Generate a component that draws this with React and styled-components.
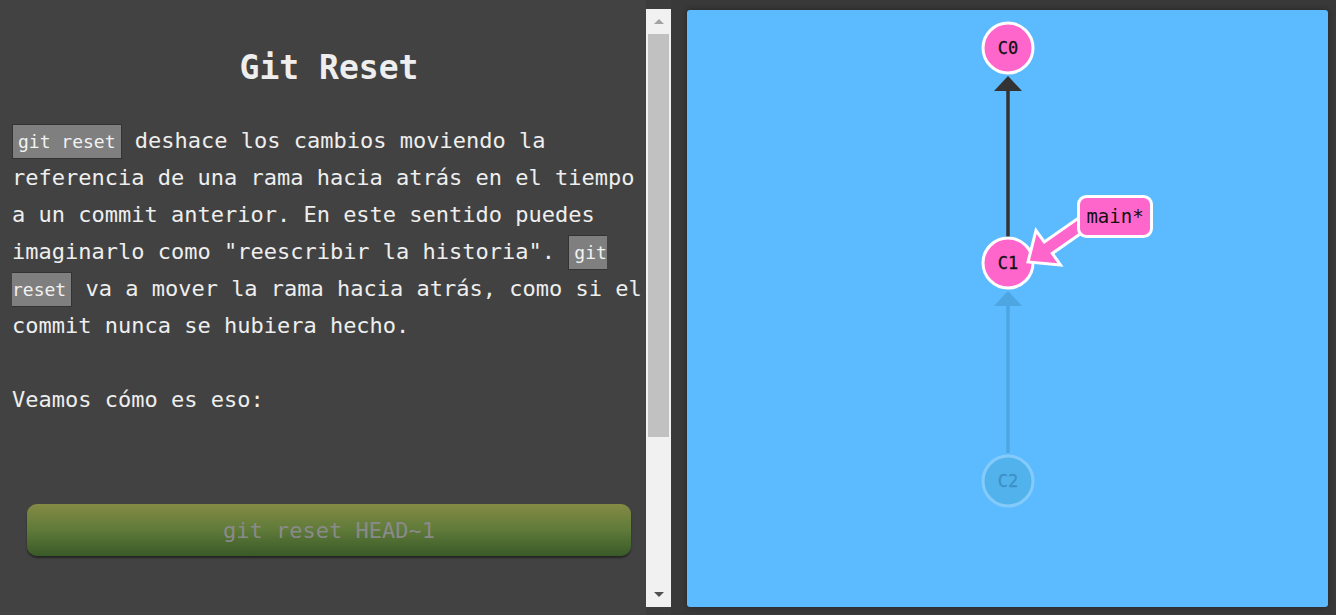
import React from "react";
import styled, { createGlobalStyle } from "styled-components";

const GlobalStyle = createGlobalStyle`
  html, body { margin: 0; padding: 0; background: #3a3a3a; overflow: hidden; }
  #root { height: 100vh; }
`;

const Page = styled.div`
  display: flex;
  height: 615px;
  width: 1336px;
  font-family: "DejaVu Sans Mono", "Liberation Mono", monospace;
`;

const InstructionsPane = styled.div`
  width: 646px;
  flex: none;
  box-sizing: border-box;
  background: #424242;
  padding: 48px 0 0 12px;
  color: #eeeeee;
`;

const Title = styled.h1`
  margin: 0 0 34px;
  font-size: 33px;
  line-height: 40px;
  font-weight: bold;
  text-align: center;
  color: #eeeeee;
`;

const Paragraph = styled.p`
  margin: ${(p) => (p.$gap ? "37px" : "0")} 0 0;
  font-size: 22px;
  line-height: 37px;
  white-space: nowrap;
`;

const Code = styled.code`
  font-family: "DejaVu Sans Mono", "Liberation Mono", monospace;
  font-size: 18px;
  line-height: 18px;
  background: #7f7f7f;
  border: 1px solid #333333;
  padding: 6px 5px;
  color: #f2f2f2;
`;

const CommandButton = styled.div`
  margin: 86px 15px 0;
  height: 52px;
  border-radius: 10px;
  background: linear-gradient(to bottom, #848b44 0%, #5f7a39 50%, #395a28 100%);
  box-shadow: 0 2px 2px rgba(0, 0, 0, 0.45);
  display: flex;
  align-items: center;
  justify-content: center;
  color: #8a8a8a;
  font-size: 22px;
`;

const ScrollColumn = styled.div`
  width: 25px;
  flex: none;
  display: flex;
  padding: 9px 0 8px;
  box-sizing: border-box;
  background: #3c3c3c;
`;

const ScrollTrack = styled.div`
  flex: 1;
  background: #f1f1f1;
  display: flex;
  flex-direction: column;
  align-items: center;
`;

const ScrollButton = styled.div`
  height: 25px;
  width: 100%;
  flex: none;
  display: flex;
  align-items: center;
  justify-content: center;
`;

const Triangle = styled.div`
  width: 0;
  height: 0;
  border-left: 5px solid transparent;
  border-right: 5px solid transparent;
  ${(p) =>
    p.$up
      ? `border-bottom: 5px solid #a3a3a3;`
      : `border-top: 5px solid #505050;`}
`;

const Thumb = styled.div`
  width: 21px;
  height: 403px;
  background: #c1c1c1;
  flex: none;
`;

const Filler = styled.div`
  flex: 1;
`;

const VisualArea = styled.div`
  flex: 1;
  display: flex;
  padding: 10px 8px 8px 16px;
  background: #393939;
`;

const Canvas = styled.div`
  flex: 1;
  background: #5cbaff;
  border-radius: 3px;
  box-shadow: 0 0 6px rgba(0, 0, 0, 0.35);
  overflow: hidden;
  display: flex;
`;

const GraphSvg = styled.svg`
  width: 100%;
  height: 100%;
  display: block;
`;

const CommitLabel = styled.text`
  font-family: "DejaVu Sans Mono", "Liberation Mono", monospace;
  font-size: 17px;
`;

const BranchLabel = styled.text`
  font-family: "DejaVu Sans Mono", "Liberation Mono", monospace;
  font-size: 19px;
`;

function Commit({ x, y, id, faded }) {
  return (
    <g>
      <circle
        cx={x}
        cy={y}
        r={25}
        fill={faded ? "#52b3ec" : "#ff66cc"}
        stroke={faded ? "#84cbfb" : "#ffffff"}
        strokeWidth={3}
      />
      <CommitLabel
        x={x}
        y={y + 6}
        textAnchor="middle"
        fill={faded ? "#3d90c6" : "#111111"}
        stroke={faded ? "#3d90c6" : "#111111"}
        strokeWidth={0.3}
      >
        {id}
      </CommitLabel>
    </g>
  );
}

function Edge({ x, y1, y2, faded }) {
  const c = faded ? "#4da6e2" : "#333333";
  return (
    <g>
      <line x1={x} y1={y1} x2={x} y2={y2 + 14} stroke={c} strokeWidth={3.5} />
      <polygon points={`${x},${y2} ${x - 14},${y2 + 15} ${x + 14},${y2 + 15}`} fill={c} />
    </g>
  );
}

export default function App() {
  return (
    <>
      <GlobalStyle />
      <Page>
        <InstructionsPane>
          <Title>Git Reset</Title>
          <Paragraph>
            <Code>git reset</Code> deshace los cambios moviendo la
            <br />
            referencia de una rama hacia atrás en el tiempo
            <br />
            a un commit anterior. En este sentido puedes
            <br />
            imaginarlo como "reescribir la historia". <Code>git<br />reset</Code> va a mover la rama hacia atrás, como si el
            <br />
            commit nunca se hubiera hecho.
          </Paragraph>
          <Paragraph $gap>Veamos cómo es eso:</Paragraph>
          <CommandButton>git reset HEAD~1</CommandButton>
        </InstructionsPane>
        <ScrollColumn>
          <ScrollTrack>
            <ScrollButton>
              <Triangle $up />
            </ScrollButton>
            <Thumb />
            <Filler />
            <ScrollButton>
              <Triangle />
            </ScrollButton>
          </ScrollTrack>
        </ScrollColumn>
        <VisualArea>
          <Canvas>
            <GraphSvg viewBox="0 0 641 597" preserveAspectRatio="xMinYMin meet">
              <Edge x={321} y1={443} y2={281} faded />
              <Edge x={321} y1={228} y2={66} />
              <Commit x={321} y={38} id="C0" />
              <Commit x={321} y={253} id="C1" />
              <Commit x={321} y={471} id="C2" faded />
              <polygon
                points="402,217.7 365.3,243.4 373.5,255 341,252 349,220.5 357.3,232 394,206.3"
                fill="#ff66cc"
                stroke="#ffffff"
                strokeWidth={3}
                strokeLinejoin="miter"
              />
              <rect x={391.5} y={186.5} width={73} height={40} rx={8} fill="#ff66cc" stroke="#ffffff" strokeWidth={3} />
              <BranchLabel x={428} y={213} textAnchor="middle" fill="#111111">
                main*
              </BranchLabel>
            </GraphSvg>
          </Canvas>
        </VisualArea>
      </Page>
    </>
  );
}
